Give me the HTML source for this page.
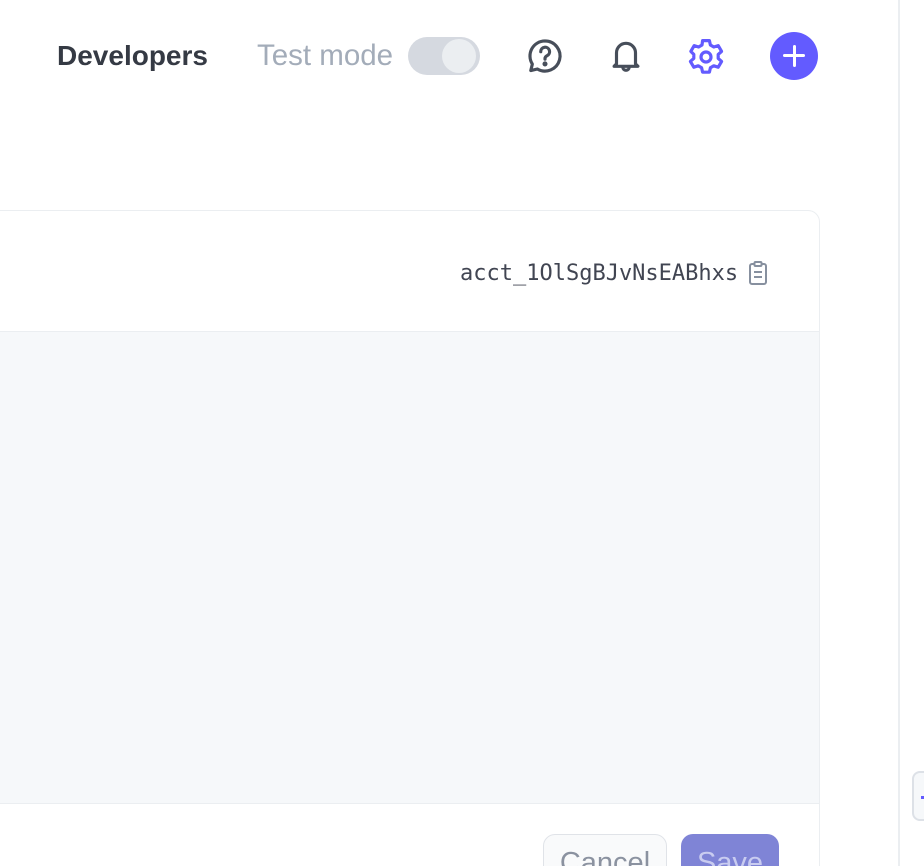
<!DOCTYPE html>
<html style="overflow:hidden;height:866px"><head><style>
body{margin:0;width:924px;height:866px;overflow:hidden;background:#fff;font-family:"Liberation Sans",sans-serif;position:relative}
.abs{position:absolute}
</style></head><body>
<div class="abs" style="left:57px;top:38px;font-size:28px;font-weight:bold;color:#353a44;line-height:36px">Developers</div>
<div class="abs" style="left:257px;top:38px;font-size:29.5px;color:#a3acb9;line-height:36px">Test mode</div>
<div class="abs" style="left:408px;top:37px;width:72px;height:38px;border-radius:19px;background:#d5d9e0"></div>
<div class="abs" style="left:442px;top:39px;width:34px;height:34px;border-radius:50%;background:#ebeef1"></div>
<svg class="abs" style="left:526px;top:37px" width="38" height="38" viewBox="0 0 24 24" fill="none" stroke="#474e5a" stroke-width="2" stroke-linecap="round" stroke-linejoin="round"><path d="M12 2.5a9.5 9.5 0 1 1-4.8 17.7L3 21.2l1-4.1A9.5 9.5 0 0 1 12 2.5z"/><path d="M9.3 9.3a2.8 2.8 0 1 1 4 2.5c-.8.4-1.3 1-1.3 1.9v.3"/><circle cx="12" cy="17" r=".6" fill="#474e5a"/></svg>
<svg class="abs" style="left:607px;top:37px" width="38" height="38" viewBox="0 0 24 24" fill="none" stroke="#474e5a" stroke-width="2" stroke-linecap="round" stroke-linejoin="round"><path d="M6 17V10a6 6 0 0 1 12 0v7l1.5 1.5h-15z"/><path d="M10 19a2 2 0 0 0 4 0"/></svg>
<svg class="abs" style="left:688px;top:39px" width="36" height="36" viewBox="3 3 18 18" fill="none" stroke="#635bff" stroke-width="1.6" stroke-linejoin="round"><path d="M10.3 3.8h3.4l.5 2.2 1.7 1 2.2-.7 1.7 2.9-1.7 1.5v2l1.7 1.5-1.7 2.9-2.2-.7-1.7 1-.5 2.2h-3.4l-.5-2.2-1.7-1-2.2.7-1.7-2.9 1.7-1.5v-2L4.4 9.2l1.7-2.9 2.2.7 1.7-1z"/><circle cx="12" cy="12" r="2.5"/></svg>
<div class="abs" style="left:770px;top:32px;width:48px;height:48px;border-radius:50%;background:#635bff"></div>
<div class="abs" style="left:783px;top:54px;width:22px;height:3px;background:#fff;border-radius:2px"></div>
<div class="abs" style="left:792.5px;top:45px;width:3px;height:22px;background:#fff;border-radius:2px"></div>

<div class="abs" style="left:-20px;top:210px;width:838px;height:680px;border:1px solid #ebeef1;border-radius:12px;overflow:hidden;background:#fff">
  <div class="abs" style="left:0;top:120px;width:100%;height:471px;background:#f6f8fa;border-top:1px solid #ebeef1;border-bottom:1px solid #ebeef1"></div>
</div>
<div class="abs" style="left:460px;top:260px;font-family:'DejaVu Sans Mono',monospace;font-size:22px;color:#414552;line-height:28px;letter-spacing:0">acct_1OlSgBJvNsEABhxs</div>
<svg class="abs" style="left:747px;top:260px" width="22" height="26" viewBox="0 0 22 26" fill="none" stroke="#87909f" stroke-width="2"><rect x="3" y="4" width="16" height="20" rx="2"/><rect x="7.5" y="2" width="7" height="4" rx="1" fill="#fff"/><path d="M7 12h8M7 17h8"/></svg>
<div class="abs" style="left:543px;top:834px;width:124px;height:60px;border:1px solid #e0e3e8;border-radius:12px;background:#f9fafb;box-sizing:border-box"></div>
<div class="abs" style="left:543px;top:845px;width:124px;text-align:center;font-size:29px;color:#8b92a0;line-height:36px">Cancel</div>
<div class="abs" style="left:681px;top:834px;width:98px;height:60px;border-radius:12px;background:#7f84d6"></div>
<div class="abs" style="left:681px;top:845px;width:98px;text-align:center;font-size:29px;color:#c9ccf0;line-height:36px">Save</div>
<div class="abs" style="left:898px;top:0;width:2px;height:866px;background:#ebeef1"></div>
<div class="abs" style="left:912px;top:771px;width:30px;height:50px;border:2px solid #dde1e7;border-radius:8px;background:#f6f8fa;box-sizing:border-box"></div>
<div class="abs" style="left:921px;top:796px;width:3px;height:3px;background:#635bff"></div>
</body></html>
